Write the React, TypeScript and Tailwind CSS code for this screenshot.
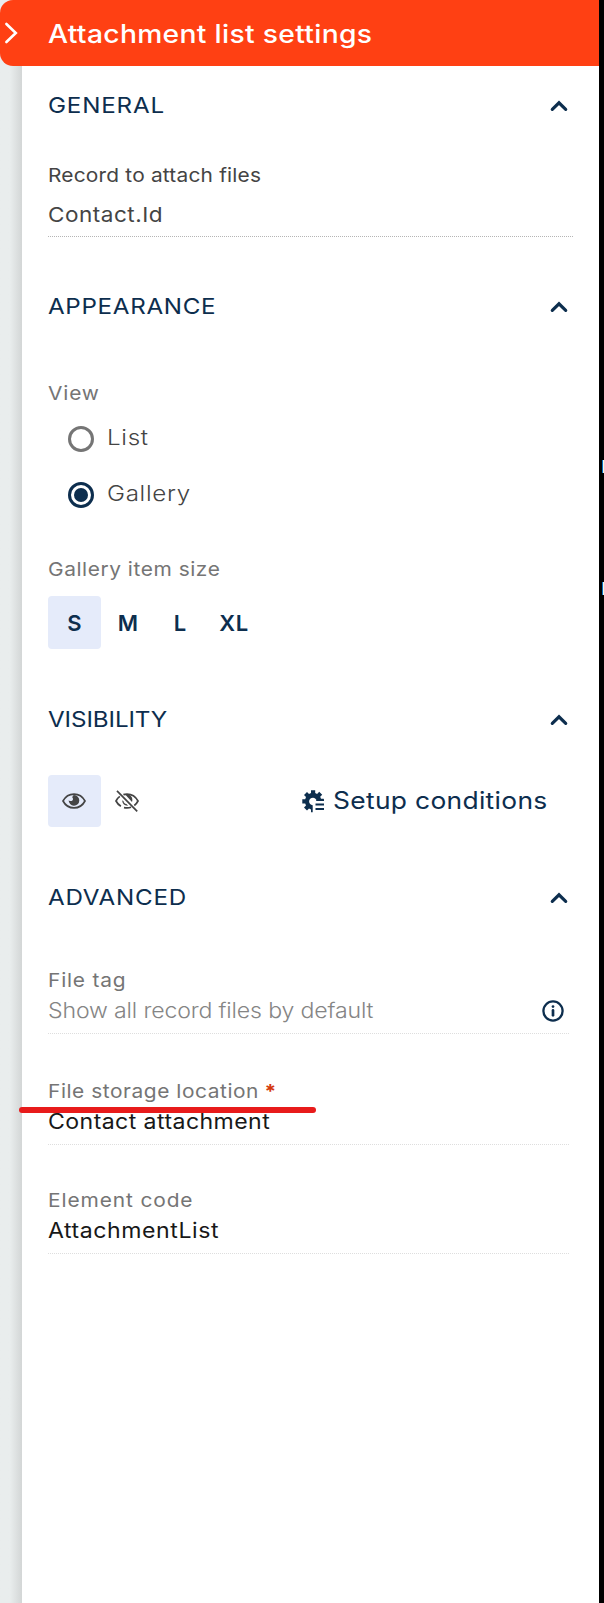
import React from 'react'
import clsx from 'clsx'

interface WideTextProps {
  children: React.ReactNode
  className?: string
}

// Stretches Inter a little so it reads as a wide geometric face
const WideText: React.FC<WideTextProps> = ({ children, className }) => (
  <span className={clsx('inline-block origin-left scale-x-110 whitespace-nowrap', className)}>
    {children}
  </span>
)

interface SectionHeaderProps {
  title: string
  titleClass: string
  className?: string
}

const SectionHeader: React.FC<SectionHeaderProps> = ({ title, titleClass, className }) => (
  <div
    className={clsx(
      'flex h-[50px] items-center justify-between pr-[31px] text-[22px] leading-none text-[#0d2e4e]',
      className
    )}
  >
    <WideText className={titleClass}>{title}</WideText>
    <svg width="18" height="12" viewBox="0 0 18 12" fill="none" className="mt-[2px]">
      <path
        d="M2.3 9.3L9 2.8L15.7 9.3"
        stroke="#0d2e4e"
        strokeWidth="3.2"
        strokeLinecap="round"
        strokeLinejoin="miter"
      />
    </svg>
  </div>
)

interface FieldProps {
  label: string
  labelClass: string
  value: string
  valueClass: string
  required?: boolean
  info?: boolean
  className?: string
}

const Field: React.FC<FieldProps> = ({
  label,
  labelClass,
  value,
  valueClass,
  required,
  info,
  className,
}) => (
  <div className={clsx('mr-[30px] h-[66px] border-b border-dotted border-[#dedede]', className)}>
    <div className="flex h-6 items-center text-[19px] leading-none text-[#757575]">
      <WideText className={labelClass}>
        {label}
        {required && <span className="ml-[5px] font-bold text-[#d4380d]">*</span>}
      </WideText>
    </div>
    <div className="mt-[6px] flex h-[25px] items-center justify-between text-[21px] leading-none">
      <WideText className={valueClass}>{value}</WideText>
      {info && <InfoIcon />}
    </div>
  </div>
)

const InfoIcon = () => (
  <svg width="22" height="22" viewBox="0 0 22 22" fill="none" className="mr-[5px]">
    <circle cx="11" cy="11" r="9.6" stroke="#0d2e4e" strokeWidth="2.3" />
    <circle cx="11" cy="6.6" r="1.35" fill="#0d2e4e" />
    <path d="M11 10.4V15.3" stroke="#0d2e4e" strokeWidth="2.7" strokeLinecap="round" />
  </svg>
)

const EyeIcon = () => (
  <svg width="24" height="16" viewBox="0 0 24 16" fill="none" className="-ml-[2px]">
    <path
      d="M1 8C3.4 3.5 7.3 1.1 12 1.1S20.6 3.5 23 8C20.6 12.5 16.7 14.9 12 14.9S3.4 12.5 1 8Z"
      stroke="#444"
      strokeWidth="1.7"
      strokeLinejoin="round"
    />
    <path
      d="M12 2.1A5.3 5.3 0 1 1 6.7 7.2C7.8 8.2 9.4 8.4 10.4 7.5C11.3 6.6 11.2 5.2 10.3 4.4C10.6 3.2 11.2 2.3 12 2.1Z"
      fill="#444"
    />
  </svg>
)

const EyeOffIcon = () => (
  <svg width="24" height="22" viewBox="0 0 24 22" fill="none" className="-ml-[2px]">
    <path
      d="M4.8 6.4C3.3 7.5 2 9.1 1 11C2.2 13.3 3.9 15.1 5.9 16.3M9 17.6C10 17.8 11 17.9 12 17.9C13.5 17.9 14.8 17.7 16.1 17.2M8.4 4.6C9.5 4.2 10.7 4.1 12 4.1C16.7 4.1 20.6 6.5 23 11C22 12.9 20.8 14.4 19.3 15.5"
      stroke="#444"
      strokeWidth="1.7"
    />
    <path d="M10.4 4.8C14.8 3.6 18.6 7.6 17 12Z" fill="#444" />
    <path d="M7.3 10.2C7.2 13.5 9.6 15.9 13 15.6L11.4 14C9.8 13.8 8.6 12.6 8.6 11.3Z" fill="#444" />
    <path d="M2 .8L22.2 21.3" stroke="#444" strokeWidth="1.7" />
  </svg>
)

const GearListIcon = () => (
  <svg width="23" height="23" viewBox="0 0 23 23" fill="none">
    <g fill="#0d2e4e">
      <path d="M9 .3H13.2V3.1L15.1 3.9L17.2 1.8L20.2 4.8L18.2 6.8L19 8.8H21.7V10.9H15C14.3 9 12.8 7.7 11 7.7C8.8 7.7 7.1 9.4 7.1 11.5C7.1 13.4 8.6 15 10.7 15.3V22.3H9V19.4L7 18.6L5 20.6L2 17.6L4 15.6L3.2 13.5H.3V9.3H3.2L4 7.1L2 5.1L5 2.1L7 4.1L9 3.1Z" />
      <path d="M15 9.3H22V11H14ZM13.5 13.6H22V15.6H13.5ZM13.5 18H22V20H13.5Z" />
    </g>
  </svg>
)

const radios = [
  { label: 'List', checked: false },
  { label: 'Gallery', checked: true },
]

const sizes = [
  { label: 'S', className: 'w-[53px] rounded bg-[#e5ebfa]' },
  { label: 'M', className: 'w-[54px]' },
  { label: 'L', className: 'w-[50px]' },
  { label: 'XL', className: 'w-[58px] tracking-[0.6px]' },
]

export default function App() {
  return (
    <div className="flex h-[1603px] w-[604px] overflow-hidden bg-black font-['Inter',sans-serif]">
      <div className="flex w-[599px] flex-col bg-[#e9eded]">
        <header className="flex h-[66px] shrink-0 items-center rounded-l-[13px] bg-[#ff4013]">
          <svg width="20" height="24" viewBox="0 0 20 24" fill="none" className="mr-7">
            <path
              d="M6.4 3L15.8 12L6.4 21"
              stroke="white"
              strokeWidth="2.6"
              strokeLinecap="round"
            />
          </svg>
          <h1 className="mt-[2px] text-[25.7px] leading-none font-medium text-white">
            <WideText className="tracking-[0.28px]">Attachment list settings</WideText>
          </h1>
        </header>

        <div className="flex flex-1">
          <div className="w-[22px] bg-linear-to-r from-[#e9eded] from-45% to-[#d3d6d6]" />

          <main className="flex-1 bg-white pt-[14px] pl-[26px]">
            {/* General */}
            <SectionHeader title="GENERAL" titleClass="tracking-[0.73px]" />
            <div className="mt-[33px] mr-[26px] h-[74px] border-b border-dotted border-[#b5b5b5] text-[#444]">
              <div className="flex h-6 items-center text-[19px] leading-none">
                <WideText className="tracking-[0.17px]">Record to attach files</WideText>
              </div>
              <div className="mt-4 flex h-[25px] items-center text-[20.5px] leading-none">
                <WideText className="tracking-[0.45px]">Contact.Id</WideText>
              </div>
            </div>

            {/* Appearance */}
            <SectionHeader title="APPEARANCE" className="mt-11" titleClass="tracking-[0.6px]" />
            <div className="mt-[50px] flex h-6 items-center text-[19px] leading-none text-[#757575]">
              <WideText className="tracking-[0.75px]">View</WideText>
            </div>
            <div className="mt-3 flex flex-col gap-3 pl-5">
              {radios.map((radio) => (
                <label key={radio.label} className="flex h-11 items-center gap-[13px]">
                  <span
                    className={clsx(
                      'flex size-[26px] items-center justify-center rounded-full border-[3px]',
                      radio.checked ? 'border-[#0d2e4e]' : 'border-[#757575]'
                    )}
                  >
                    {radio.checked && <span className="size-[14px] rounded-full bg-[#0d2e4e]" />}
                  </span>
                  <WideText className="-mt-1 text-[22px] leading-none font-light tracking-[0.6px] text-[#444]">
                    {radio.label}
                  </WideText>
                </label>
              ))}
            </div>
            <div className="mt-10 flex h-6 items-center text-[19px] leading-none text-[#757575]">
              <WideText className="tracking-[0.5px]">Gallery item size</WideText>
            </div>
            <div className="mt-[15px] flex h-[53px]">
              {sizes.map((size) => (
                <button
                  key={size.label}
                  className={clsx(
                    'flex items-center justify-center text-[22px] leading-none font-[570] text-[#0d2e4e]',
                    size.className
                  )}
                >
                  {size.label}
                </button>
              ))}
            </div>

            {/* Visibility */}
            <SectionHeader title="VISIBILITY" className="mt-[45px]" titleClass="tracking-[-0.1px]" />
            <div className="mt-[31px] flex h-[52px] items-center">
              <button className="flex h-[52px] w-[53px] items-center justify-center rounded bg-[#e5ebfa]">
                <EyeIcon />
              </button>
              <button className="flex h-[52px] w-[53px] items-center justify-center">
                <EyeOffIcon />
              </button>
              <button className="ml-[148px] flex items-center gap-2 text-[24px] leading-none text-[#0d2e4e]">
                <GearListIcon />
                <WideText className="tracking-[0.28px]">Setup conditions</WideText>
              </button>
            </div>

            {/* Advanced */}
            <SectionHeader title="ADVANCED" className="mt-[45px]" titleClass="tracking-[0.67px]" />
            <Field
              className="mt-[46px]"
              label="File tag"
              labelClass="tracking-[0.72px]"
              value="Show all record files by default"
              valueClass="font-light tracking-[-0.14px] text-[#858585]"
              info
            />
            <div className="relative mt-[45px]">
              <Field
                label="File storage location"
                labelClass="tracking-[0.5px]"
                value="Contact attachment"
                valueClass="tracking-[0.38px] text-[#181818]"
                required
              />
              {/* Marker stroke drawn over the field */}
              <div className="absolute top-[28px] -left-[29px] h-[6px] w-[297px] rounded-full bg-[#e81b1b]" />
            </div>
            <Field
              className="mt-[43px]"
              label="Element code"
              labelClass="tracking-[0.8px]"
              value="AttachmentList"
              valueClass="tracking-[0.5px] text-[#181818]"
            />
          </main>
        </div>
      </div>

      {/* Sliver of the window behind the panel */}
      <div className="flex flex-1 flex-col items-end pt-[460px]">
        <div className="h-[13px] w-[2px] border-l border-[#0a6fc2] bg-[#f0fbe8]" />
        <div className="mt-[109px] h-[13px] w-[2px] border-l border-[#0a6fc2] bg-[#f0fbe8]" />
      </div>
    </div>
  )
}
